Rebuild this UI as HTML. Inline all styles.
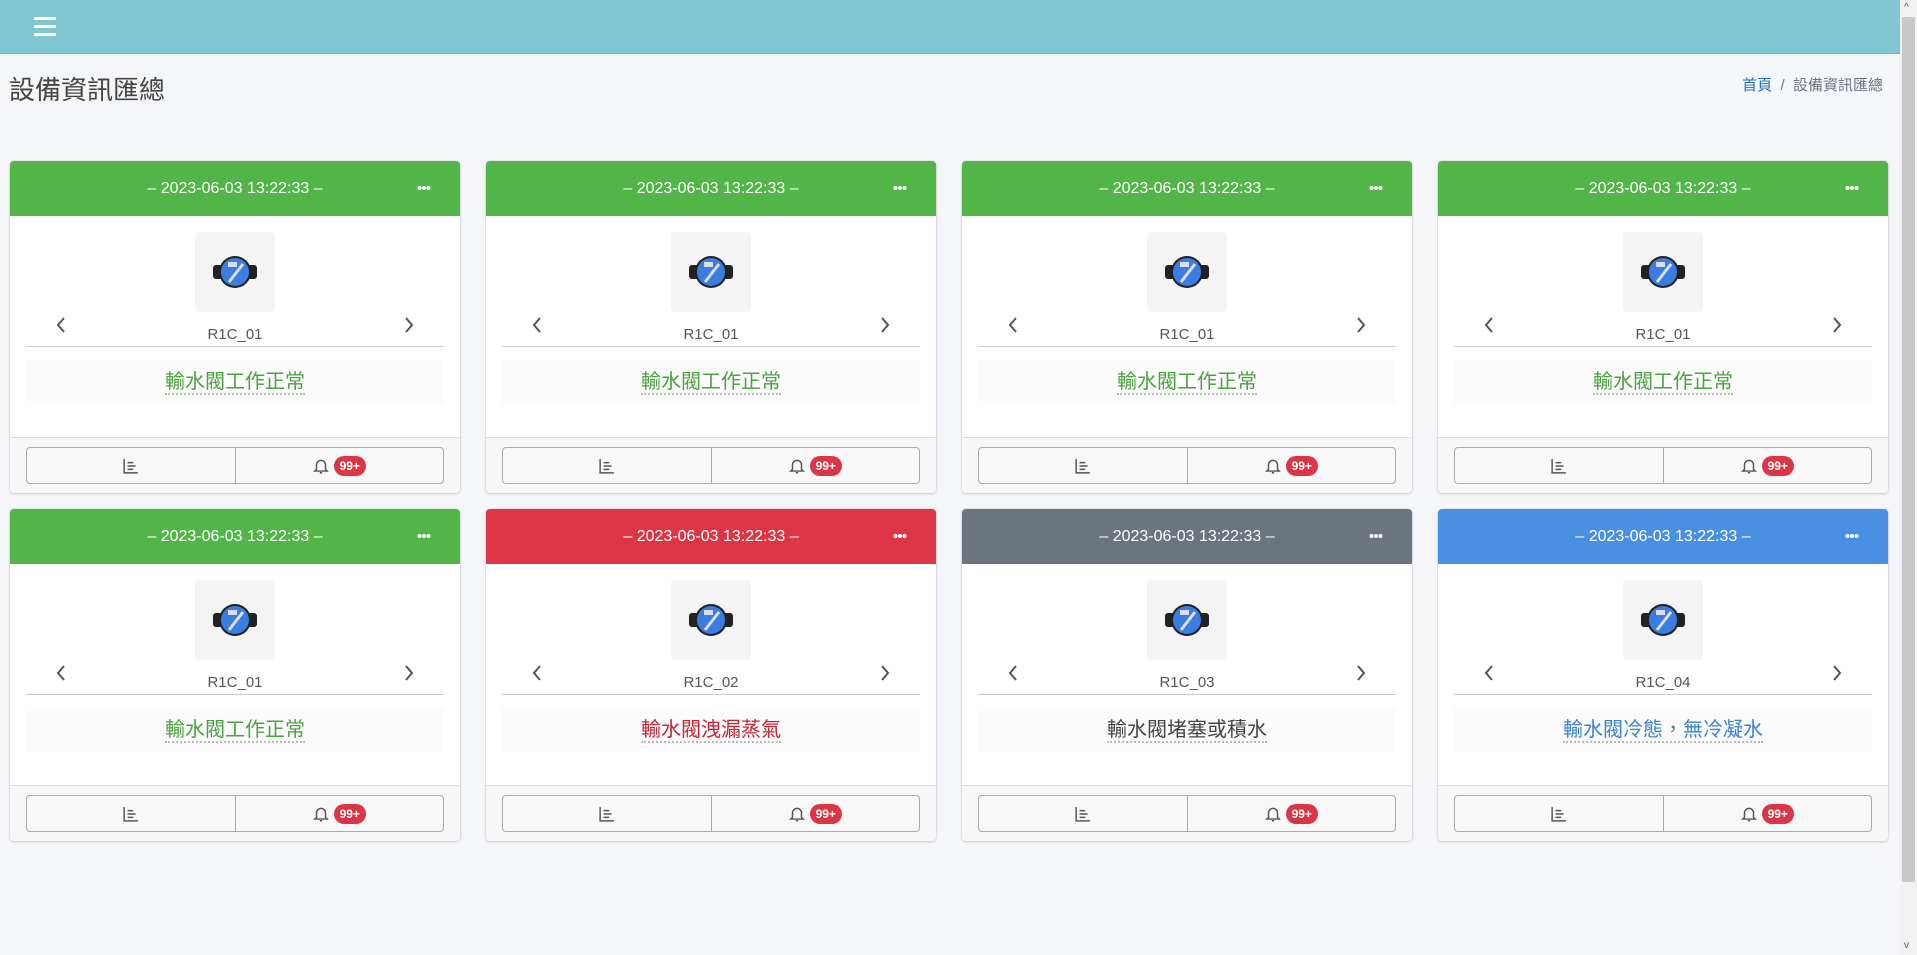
<!DOCTYPE html>
<html><head><meta charset="utf-8"><style>
*{box-sizing:border-box;margin:0;padding:0}
body{width:1917px;height:955px;overflow:hidden;background:#f4f6f9;font-family:"Liberation Sans","Noto Sans CJK TC",sans-serif;position:relative}
.nav{position:absolute;left:0;top:0;width:1900px;height:54px;background:#7fc6d2;border-bottom:1px solid #6fb5c2}
.ham{position:absolute;left:34px;top:17px;width:22px}
.ham i{display:block;height:3px;background:#fff;margin-bottom:5px;border-radius:1px}
.sb{position:absolute;left:1900px;top:0;width:17px;height:955px;background:#f1f1f1}
.sb .th{position:absolute;left:2px;top:17px;width:13px;height:865px;background:#c8c8c8}
.sb .up,.sb .dn{position:absolute;left:4px;font-size:10px;color:#555}
h1{position:absolute;left:9px;top:70px;font-size:26px;font-weight:400;color:#444}
.bc{position:absolute;right:34px;top:74px;font-size:15px;color:#6c757d}
.bc a{color:#1f6fc5}
.card{position:absolute;width:450px;height:332px;background:#fff;border-radius:4px;box-shadow:0 0 1px rgba(0,0,0,.25),0 1px 3px rgba(0,0,0,.15)}
.hd{height:55px;border-radius:4px 4px 0 0;color:#fff;font-size:16px;text-align:center;line-height:55px;position:relative}
.hd svg{position:absolute;right:29px;top:24px}
.img{position:absolute;left:185px;top:71px;width:80px;height:80px;background:#f4f4f4;border-radius:4px}
.arr{position:absolute;top:155px}
.nm{position:absolute;left:0;width:450px;top:165px;text-align:center;font-size:15px;color:#555}
.dv{position:absolute;left:16px;width:418px;top:185px;border-top:1px solid #ccc}
.st{position:absolute;left:16px;width:418px;top:199px;height:44px;background:#fbfbfb;text-align:center;line-height:44px;font-size:20px}
.st span{border-bottom:2px dotted #bbb;line-height:22px;display:inline-block}
.ft{position:absolute;left:0;top:276px;width:450px;height:56px;background:#f7f7f7;border-top:1px solid #ddd;border-radius:0 0 4px 4px}
.btns{position:absolute;left:16px;top:9px;width:418px;height:37px;border:1px solid #aaa;border-radius:4px;display:flex;background:#f8f8f8}
.btns div{flex:1;display:flex;align-items:center;justify-content:center}
.btns div+div{border-left:1px solid #aaa}
.bd{background:#dc3545;color:#fff;font-size:12px;font-weight:700;border-radius:10px;padding:3px 6px;margin-left:5px}
</style></head><body>
<div class="nav"><div class="ham"><i></i><i></i><i></i></div></div>
<div class="sb"><div class="th"></div><span class="up" style="top:2px">^</span><span class="dn" style="top:940px">v</span></div>
<h1>設備資訊匯總</h1>
<div class="bc"><a>首頁</a> &nbsp;/&nbsp; 設備資訊匯總</div>
<script>
const data=[[10,161,'#52b548','R1C_01','輸水閥工作正常','#4aa33f'],[486,161,'#52b548','R1C_01','輸水閥工作正常','#4aa33f'],[962,161,'#52b548','R1C_01','輸水閥工作正常','#4aa33f'],[1438,161,'#52b548','R1C_01','輸水閥工作正常','#4aa33f'],
[10,509,'#52b548','R1C_01','輸水閥工作正常','#4aa33f'],[486,509,'#dc3545','R1C_02','輸水閥洩漏蒸氣','#c82333'],[962,509,'#6c757d','R1C_03','輸水閥堵塞或積水','#444'],[1438,509,'#4a90e2','R1C_04','輸水閥冷態，無冷凝水','#3a82d0']];
const icon='<svg width="80" height="80" viewBox="0 0 80 80"><rect x="18" y="33" width="44" height="14" rx="3" fill="#222"/><circle cx="40" cy="40" r="16" fill="#222"/><circle cx="40" cy="40" r="14" fill="#3a7de0"/><rect x="33" y="30" width="9" height="5" fill="#dde"/><path d="M34 50 L48 32" stroke="#dde" stroke-width="3"/></svg>';
const dots='<svg width="14" height="6"><circle cx="2.5" cy="3" r="2" fill="#fff"/><circle cx="7" cy="3" r="2" fill="#fff"/><circle cx="11.5" cy="3" r="2" fill="#fff"/></svg>';
const L='<svg width="12" height="18" viewBox="0 0 12 18"><path d="M9 2L3 9l6 7" fill="none" stroke="#555" stroke-width="2"/></svg>';
const R='<svg width="12" height="18" viewBox="0 0 12 18"><path d="M3 2l6 7-6 7" fill="none" stroke="#555" stroke-width="2"/></svg>';
const chart='<svg width="16" height="16" viewBox="0 0 14 14" fill="none" stroke="#555" stroke-width="1.3"><path d="M1 1V13H13M4 4H9M4 7H11M4 10H9"/></svg>';
const bell='<svg width="16" height="18" viewBox="0 0 14 16" fill="none" stroke="#555" stroke-width="1.3"><path d="M3 11V7a4 4 0 018 0v4l1.5 1.5h-11z M6 14h2"/></svg>';
let h='';
for(const d of data){h+=`<div class="card" style="left:${d[0]}px;top:${d[1]}px"><div class="hd" style="background:${d[2]}">– 2023-06-03 13:22:33 –${dots}</div><div class="img">${icon}</div><div class="arr" style="left:45px">${L}</div><div class="arr" style="right:45px">${R}</div><div class="nm">${d[3]}</div><div class="dv"></div><div class="st" style="color:${d[5]}"><span>${d[4]}</span></div><div class="ft"><div class="btns"><div>${chart}</div><div>${bell}<span class="bd">99+</span></div></div></div></div>`}
document.write(h);
</script>
</body></html>
